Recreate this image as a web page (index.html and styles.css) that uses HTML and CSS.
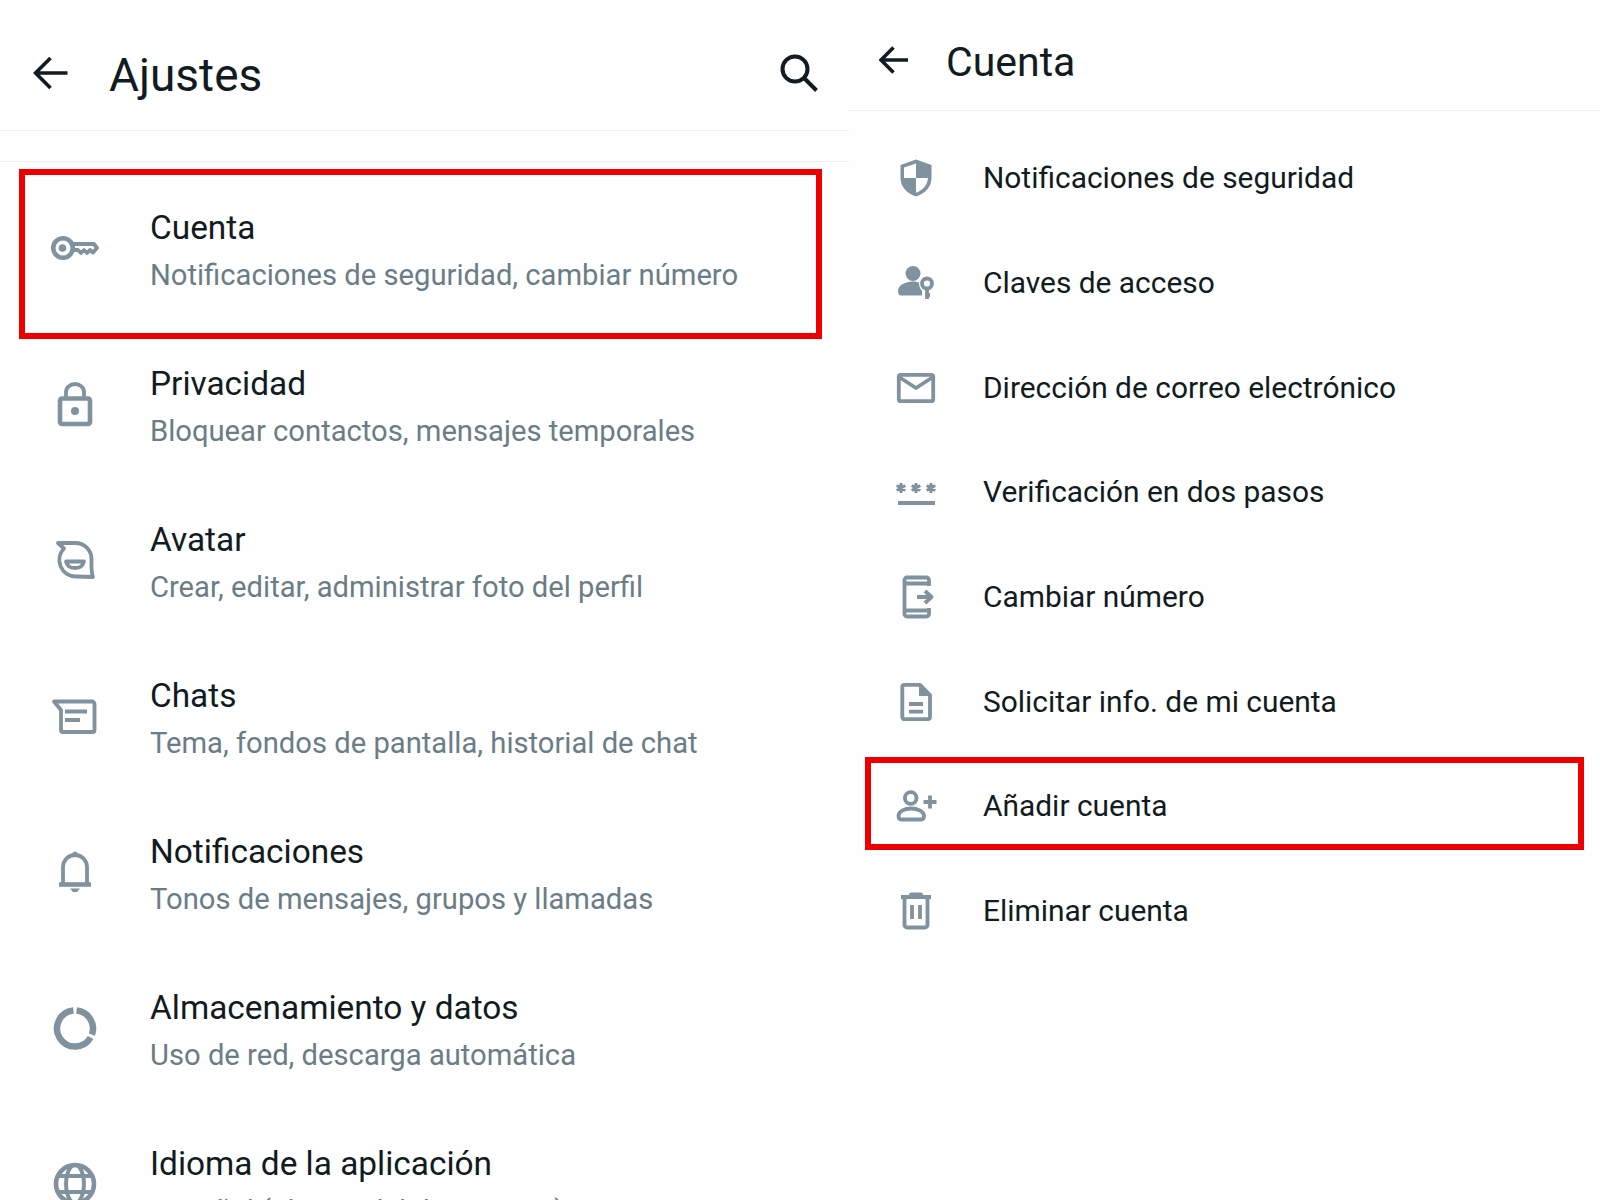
FILE: index.html
```html
<!DOCTYPE html>
<html lang="es">
<head>
  <meta charset="UTF-8" />
  <title>Ajustes y Cuenta</title>
  <link rel="stylesheet" href="styles.css">
</head>
<body>
  <div class="page">
    <!-- Ajustes -->
    <section class="panel settings">
      <header class="app-bar">
        <svg class="back" width="36" height="34" viewBox="0 0 36 34"><path d="M34.5 17H3M17.5 2L2.5 17l15 15"/></svg>
        <h1>Ajustes</h1>
        <svg class="search" width="38" height="38" viewBox="0 0 38 38"><circle cx="15" cy="15" r="12.5"/><path d="M24 24l12.5 12.5"/></svg>
      </header>
      <div class="gap-band"></div>

      <div class="list">
        <div class="row">
          <svg class="icon" viewBox="0 0 48 48"><circle class="line" cx="12" cy="24" r="9.800"/><circle class="solid" cx="11.500" cy="24" r="3.800"/><path class="thin" d="M22 20h21l3 4-4 4.500-3-2.500-3 3-3-3-3 3-3-3h-5"/></svg>
          <div class="row-text">
            <div class="row-title">Cuenta</div>
            <div class="row-sub">Notificaciones de seguridad, cambiar número</div>
          </div>
          <div class="mark mark-cuenta"></div>
        </div>
        <div class="row">
          <svg class="icon" viewBox="0 0 48 48"><rect class="line" x="9" y="18.500" width="30" height="25.500" rx="2"/><path class="thin" d="M15 18v-6a9 8 0 0 1 18 0v6"/><circle class="solid" cx="24" cy="31" r="4"/></svg>
          <div class="row-text">
            <div class="row-title">Privacidad</div>
            <div class="row-sub">Bloquear contactos, mensajes temporales</div>
          </div>
        </div>
        <div class="row">
          <svg class="icon" viewBox="0 0 48 48"><path class="thin" d="M7 7h17.500a16 16 0 0 1 16 16c0 7-.5 13 1.500 18l-17-.5A16.500 16.500 0 0 1 13 12.500z"/><path class="thin" d="M15 25.500h18c-1 5-4 6.500-9 6.500s-8-1.500-9-6.500z"/></svg>
          <div class="row-text">
            <div class="row-title">Avatar</div>
            <div class="row-sub">Crear, editar, administrar foto del perfil</div>
          </div>
        </div>
        <div class="row">
          <svg class="icon" viewBox="0 0 48 48"><path class="thin" d="M3 9.500h38a2.500 2.500 0 0 1 2.500 2.500v26a2 2 0 0 1-2 2H12a2 2 0 0 1-2-2V18z"/><path class="thin" d="M14 19.500h22M14 28h15"/></svg>
          <div class="row-text">
            <div class="row-title">Chats</div>
            <div class="row-sub">Tema, fondos de pantalla, historial de chat</div>
          </div>
        </div>
        <div class="row">
          <svg class="icon" viewBox="0 0 48 48"><path class="thin" d="M12 36V19a12 12 0 0 1 24 0v17"/><path class="line" d="M8 36.500h32"/><circle class="solid" cx="24" cy="6" r="2.500"/><path class="solid" d="M19 40.500h10l-3 3.500h-4z"/></svg>
          <div class="row-text">
            <div class="row-title">Notificaciones</div>
            <div class="row-sub">Tonos de mensajes, grupos y llamadas</div>
          </div>
        </div>
        <div class="row">
          <svg class="icon" viewBox="0 0 48 48"><path class="ring" d="M25.600 6.600A18 18 0 0 1 40.900 30.700"/><path class="ring" d="M39.600 33.500A18 18 0 1 1 22.400 6.600"/></svg>
          <div class="row-text">
            <div class="row-title">Almacenamiento y datos</div>
            <div class="row-sub">Uso de red, descarga automática</div>
          </div>
        </div>
        <div class="row">
          <svg class="icon" viewBox="0 0 48 48"><circle class="line" cx="24" cy="24" r="19"/><ellipse class="thin" cx="24" cy="24" rx="9" ry="19"/><path class="thin" d="M6 16h36M6 32h36"/></svg>
          <div class="row-text">
            <div class="row-title">Idioma de la aplicación</div>
            <div class="row-sub">Español (idioma del dispositivo)</div>
          </div>
        </div>
      </div>
    </section>

    <!-- Cuenta -->
    <section class="panel account">
      <header class="app-bar">
        <svg class="back" width="30" height="28" viewBox="0 0 30 28"><path d="M29 14H3M14.500 1.500L2 14l12.500 12.500"/></svg>
        <h1>Cuenta</h1>
      </header>

      <div class="list">
        <div class="row">
          <svg class="icon" viewBox="0 0 48 48"><path class="solid" d="M24 5.500L39.500 11v13c0 9-6.500 15.500-15.500 18.500C15 39.500 8.500 33 8.500 24V11z"/><path class="cut" d="M24 9.500l-12 4V24h12zM24 24h12c-.5 7-5 12-12 14.800z"/></svg>
          <div class="row-title">Notificaciones de seguridad</div>
        </div>
        <div class="row">
          <svg class="icon" viewBox="0 0 48 48"><circle class="solid" cx="21" cy="14.500" r="7.500"/><path class="solid" d="M6 32c0-6 8-9.500 14.500-9.500 2.500 0 5 .5 6.500 1 0 3.500 1 6.500 3 8.500v4.500H9c-2 0-3-2-3-4.500z"/><circle class="thin" cx="35" cy="24.500" r="5"/><path class="thin" d="M35 30v10M35 36h3"/></svg>
          <div class="row-title">Claves de acceso</div>
        </div>
        <div class="row">
          <svg class="icon" viewBox="0 0 48 48"><rect class="thin" x="6.800" y="10.800" width="34.400" height="26.400" rx="2"/><path class="thin" d="M7 13l17 11 17-11"/></svg>
          <div class="row-title">Dirección de correo electrónico</div>
        </div>
        <div class="row">
          <svg class="icon" viewBox="0 0 48 48"><path class="star" d="M9 15v10M4.700 17.500l8.600 5M13.300 17.500l-8.600 5M24 15v10M19.700 17.500l8.600 5M28.300 17.500l-8.600 5M39 15v10M34.700 17.500l8.600 5M43.300 17.500l-8.600 5"/><path class="thin" d="M6 35h37"/></svg>
          <div class="row-title">Verificación en dos pasos</div>
        </div>
        <div class="row">
          <svg class="icon" viewBox="0 0 48 48"><path class="thin" d="M37 13V7a2.500 2.500 0 0 0-2.500-2.500H15A2.500 2.500 0 0 0 12.500 7v34a2.500 2.500 0 0 0 2.500 2.500h19.500A2.500 2.500 0 0 0 37 41v-6M13 10.500h23M13 37.500h23"/><path class="thin" d="M25 24h14M33 18l6.500 6-6.500 6"/></svg>
          <div class="row-title">Cambiar número</div>
        </div>
        <div class="row">
          <svg class="icon" viewBox="0 0 48 48"><path class="thin" d="M12.500 6.800H28L38 17v22a2.200 2.200 0 0 1-2.200 2.200H12.500a2.200 2.200 0 0 1-2.200-2.200V9a2.200 2.200 0 0 1 2.200-2.200z"/><path class="solid" d="M27 6l12 12H27z"/><path class="thin" d="M17 26h14M17 33.700h14"/></svg>
          <div class="row-title">Solicitar info. de mi cuenta</div>
        </div>
        <div class="row">
          <svg class="icon" viewBox="0 0 48 48"><circle class="thin" cx="18.700" cy="16" r="5.800"/><path class="thin" d="M6.500 34c0-5 6.500-7.500 12.500-7.500S32 29 32 34c0 2-1 3.500-3 3.500H9.500c-2 0-3-1.500-3-3.500z"/><path class="thin" d="M38 13.500v13M31.500 20h13"/></svg>
          <div class="row-title">Añadir cuenta</div>
          <div class="mark mark-add"></div>
        </div>
        <div class="row">
          <svg class="icon" viewBox="0 0 48 48"><path class="thin" d="M12.500 11v27a2.500 2.500 0 0 0 2.500 2.500h18a2.500 2.500 0 0 0 2.500-2.500V11M9 10h30M19 9.500V7.500h10v2M20 18v14M28 18v14"/></svg>
          <div class="row-title">Eliminar cuenta</div>
        </div>
      </div>
    </section>
  </div>
</body>
</html>
```
FILE: styles.css
```css
:root {
  --bg: #fefefe;
  --ink: #111b21;
  --sub: #6a7d86;
  --icon: #7f929e;
  --divider: #efefef;
  --red: #ef0000;
}

* {
  box-sizing: border-box;
}

html, body {
  height: 100%;
}

body {
  margin: 0;
  overflow: hidden;
  font-family: Roboto, sans-serif;
  background: var(--bg);
  color: var(--ink);
}

.page {
  display: flex;
  height: 1200px;
}

.panel {
  height: 1200px;
  overflow: hidden;
}

.settings {
  width: 849px;
  flex: none;
}

.account {
  flex: 1;
}

/* top bars */
.app-bar {
  display: flex;
  align-items: center;
  border-bottom: 1px solid var(--divider);
}

.settings .app-bar {
  height: 131px;
  padding: 16px 31px 0 33px;
  gap: 40px;
}

.account .app-bar {
  height: 111px;
  padding: 10px 0 0 30px;
  gap: 37px;
}

.app-bar h1 {
  margin: 4px 0 0;
  font-weight: 400;
  font-size: 46px;
  line-height: 1;
}

.account .app-bar h1 {
  font-size: 41px;
}

.back {
  flex: none;
  fill: none;
  stroke: var(--ink);
  stroke-width: 3.6;
}

.search {
  flex: none;
  margin-left: auto;
  fill: none;
  stroke: var(--ink);
  stroke-width: 4;
}

.gap-band {
  height: 31px;
  border-bottom: 1px solid var(--divider);
}

/* rows */
.settings .list {
  padding-top: 11px;
}

.account .list {
  padding-top: 15px;
}

.row {
  position: relative;
  display: flex;
  align-items: center;
}

.settings .row {
  height: 156px;
  padding-left: 51px;
}

.account .row {
  height: 104.7px;
  padding-left: 43px;
}

.icon {
  flex: none;
  width: 48px;
  height: 48px;
  overflow: visible;
}

.settings .icon {
  margin: 0 51px 6px 0;
}

.account .icon {
  margin: 0 43px 0 0;
}

.line, .thin, .ring, .star {
  fill: none;
  stroke: var(--icon);
}

.line {
  stroke-width: 4.6;
}

.thin {
  stroke-width: 3.8;
  stroke-linejoin: round;
}

.ring {
  stroke-width: 6.5;
}

.star {
  stroke-width: 3;
}

.solid {
  fill: var(--icon);
}

.cut {
  fill: var(--bg);
}

.row-title {
  font-size: 33.4px;
  line-height: 40px;
}

.account .row-title {
  font-size: 29.9px;
}

.row-sub {
  margin-top: 7px;
  font-size: 29.2px;
  line-height: 40px;
  color: var(--sub);
}

/* red highlight boxes over the rows */
.mark {
  position: absolute;
  border: 6px solid var(--red);
}

.mark-cuenta {
  top: -4px;
  left: 19px;
  width: 803px;
  height: 170px;
}

.mark-add {
  top: 3px;
  left: 16px;
  width: 719px;
  height: 93px;
}
```
